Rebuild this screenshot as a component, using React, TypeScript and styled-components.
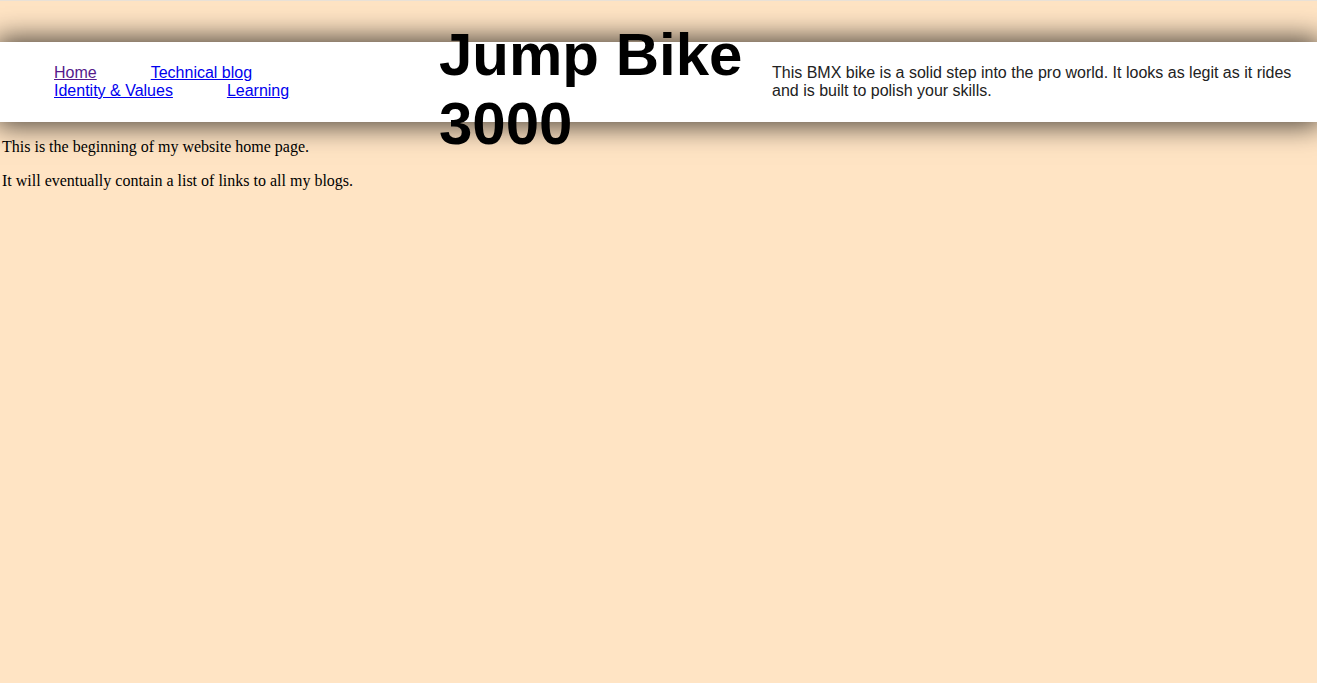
import React from "react";
import styled, { createGlobalStyle } from "styled-components";

const GlobalStyle = createGlobalStyle`
  html, body {
    margin: 0;
    padding: 0;
    background: #ffe4c4;
  }
  body {
    border-top: 1px solid #e9e1d7;
    font-family: "Liberation Serif", "Times New Roman", serif;
    font-size: 16px;
    color: #000;
  }
`;

const Page = styled.div`
  padding: 41px 0 0;
`;

const Header = styled.header`
  display: grid;
  grid-template-columns: 439px 333px 1fr;
  grid-template-rows: 80px;
  align-items: center;
  height: 80px;
  background: #ffffff;
  box-shadow: 0 0 26px 4px rgba(0, 0, 0, 0.7);
  font-family: "Liberation Sans", Arial, sans-serif;
  position: relative;
`;

const Nav = styled.nav`
  display: flex;
  flex-wrap: wrap;
  max-width: 400px;
  line-height: 18px;
  font-size: 16px;
`;

const NavLink = styled.a<{ $visited?: boolean }>`
  margin-left: 54px;
  color: ${(p) => (p.$visited ? "#551a8b" : "#0000ee")};
  text-decoration: underline;
`;

const Title = styled.h1`
  align-self: center;
  margin: 14px 0 0;
  font-size: 60px;
  font-weight: bold;
  line-height: 69px;
  color: #000;
`;

const Blurb = styled.p`
  margin: 0;
  font-size: 16px;
  line-height: 18px;
  color: #222;
`;

const Main = styled.main`
  padding: 16px 2px 0;
`;

const Para = styled.p`
  margin: 0 0 16px;
  line-height: 18px;
`;

export default function App() {
  return (
    <>
      <GlobalStyle />
      <Page>
        <Header>
          <Nav>
            <NavLink href="#" $visited>
              Home
            </NavLink>
            <NavLink href="#">Technical blog</NavLink>
            <NavLink href="#">Identity &amp; Values</NavLink>
            <NavLink href="#">Learning</NavLink>
          </Nav>
          <Title>Jump Bike 3000</Title>
          <Blurb>
            This BMX bike is a solid step into the pro world. It looks as legit as it rides and is
            built to polish your skills.
          </Blurb>
        </Header>
        <Main>
          <Para>This is the beginning of my website home page.</Para>
          <Para>It will eventually contain a list of links to all my blogs.</Para>
        </Main>
      </Page>
    </>
  );
}
